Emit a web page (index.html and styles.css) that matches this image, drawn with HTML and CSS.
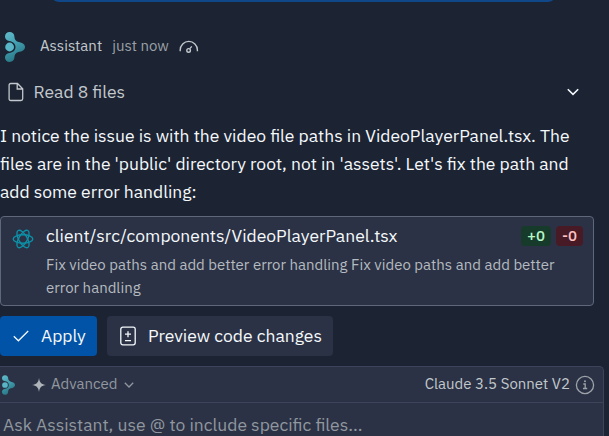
FILE: index.html
```html
<!DOCTYPE html>
<html lang="en">
<head>
<meta charset="utf-8">
<title>Assistant</title>
<link rel="stylesheet" href="styles.css">
</head>
<body>
<svg class="defs" aria-hidden="true">
  <defs>
    <linearGradient id="teal" x1="0" y1="0" x2="0.4" y2="1">
      <stop offset="0" stop-color="#63bccd"/>
      <stop offset="0.5" stop-color="#42a0b0"/>
      <stop offset="1" stop-color="#287685"/>
    </linearGradient>
    <symbol id="logo" viewBox="0 0 20 30">
      <path fill="url(#teal)" d="M4.600 0C7.400 0 9.300 1.800 9.400 4.400C9.500 7.400 10.600 9.200 13.600 9.900C17 10.500 20 12 20 15S17 19.500 13.600 20.100C10.600 20.800 9.500 22.600 9.400 25.600C9.300 28.200 7.400 30 4.600 30C2 30 0 28 0 25.400C0 23 1.800 21.400 4.200 21C8 20.500 10.500 18.500 10.500 15S8 9.500 4.200 9C1.800 8.600 0 7 0 4.600C0 2 2 0 4.600 0Z"/>
      <circle cx="4.600" cy="15" r="4.400" fill="#58b6c7"/>
    </symbol>
  </defs>
</svg>
<div class="chat">
  <div class="prompt-edge"></div>
  <header class="author">
    <svg class="author-logo"><use href="#logo"/></svg>
    <span class="author-name">Assistant</span>
    <span class="author-time">just now</span>
    <svg class="gauge" viewBox="0 0 20 14"><path d="M1.200 11.200V10A8.400 8.400 0 0 1 18.400 10V11.200M10.800 8.600L12.800 6.400"/><circle cx="9.600" cy="10.400" r="1.800"/></svg>
  </header>
  <div class="read">
    <svg class="file" viewBox="0 0 16 20"><path d="M2.800 1.500H9.500L14.700 6.800V16.800Q14.700 18.500 13 18.500H2.800Q1.100 18.500 1.100 16.800V3.200Q1.100 1.500 2.800 1.500ZM9.200 1.800V7H14.500"/></svg>
    <span>Read 8 files</span>
    <svg class="chevron" viewBox="0 0 12 8"><path d="M.8 1.200L6 6.400L11.200 1.200"/></svg>
  </div>
  <p class="message">I notice the issue is with the video file paths in VideoPlayerPanel.tsx. The<br>files are in the 'public' directory root, not in 'assets'. Let's fix the path and<br>add some error handling:</p>
  <section class="card">
    <svg class="react" viewBox="-11 -11 22 22"><g><ellipse rx="9.800" ry="4.200"/><ellipse rx="9.800" ry="4.200" transform="rotate(60)"/><ellipse rx="9.800" ry="4.200" transform="rotate(120)"/></g></svg>
    <div class="card-body">
      <div class="card-head">
        <span class="path">client/src/components/VideoPlayerPanel.tsx</span>
        <span class="badge added">+0</span>
        <span class="badge removed">-0</span>
      </div>
      <p class="summary">Fix video paths and add better error handling Fix video paths and add better<br>error handling</p>
    </div>
  </section>
  <div class="actions">
    <button class="btn primary"><svg class="check" viewBox="0 0 16 12"><path d="M.8 6.200L5.400 10.800L15.200 1"/></svg>Apply</button>
    <button class="btn"><svg class="diff" viewBox="0 0 16 20"><rect x=".8" y="1.200" width="14.400" height="17.600" rx="2"/><path d="M5 8.200H11M8 5.200V11.200M5 14.700H11"/></svg>Preview code changes</button>
  </div>
  <section class="composer">
    <div class="toolbar">
      <svg class="tool-logo"><use href="#logo"/></svg>
      <svg class="spark" viewBox="0 0 14 14"><path d="M7 0C7.600 4.600 9.400 6.400 14 7C9.400 7.600 7.600 9.400 7 14C6.400 9.400 4.600 7.600 0 7C4.600 6.400 6.400 4.600 7 0Z"/></svg>
      <span class="mode">Advanced</span>
      <svg class="mode-chevron" viewBox="0 0 10 6"><path d="M.8 .8L5 5L9.200 .8"/></svg>
      <span class="model">Claude 3.5 Sonnet V2</span>
      <svg class="info" viewBox="0 0 20 20"><circle cx="10" cy="10" r="8.600"/><path d="M8.300 9H10.200V13.500M8 13.500H12.200"/><circle class="dot" cx="10" cy="6.300" r="1"/></svg>
    </div>
    <div class="input">Ask Assistant, use @ to include specific files...</div>
  </section>
</div>
</body>
</html>
```
FILE: styles.css
```css
* { box-sizing: border-box; }
html, body { margin: 0; height: 100%; overflow: hidden; background: #1c2333; }
body {
  color: #f5f9fc;
  font: 17.5px/28px "IBM Plex Sans", Roboto, sans-serif;
}
p { margin: 0; }
svg { flex: none; fill: none; stroke: currentColor; stroke-width: 1.3; }
.defs { position: absolute; width: 0; height: 0; }
.chat { display: flex; flex-direction: column; height: 436px; overflow: hidden; }
.chat > * { flex-shrink: 0; }
.prompt-edge {
  height: 2px;
  margin: 0 56px 0 54px;
  background: #0f4788;
  border-radius: 0 0 8px 8px / 0 0 2px 2px;
}
.author { display: flex; align-items: center; height: 30px; margin-top: 30px; padding-left: 5px; font-size: 15px; }
.author-logo { width: 20px; height: 30px; stroke: none; }
.author-name, .author-time { padding-bottom: 2px; }
.author-name { margin-left: 15px; color: #c2c8cc; }
.author-time { margin-left: 10px; color: #9aa0a6; }
.gauge { width: 20px; height: 14px; margin-left: 10px; color: #c2c8cc; stroke-width: 1.400; }
.read { display: flex; align-items: center; height: 28px; margin-top: 16px; padding: 0 30px 0 8px; color: #c2c8cc; }
.file { width: 16px; height: 20px; margin-right: 9.500px; }
.chevron { width: 12px; height: 8px; margin-left: auto; color: #f5f9fc; stroke-width: 1.600; }
.message { margin-top: 16px; white-space: nowrap; }
.card {
  display: flex;
  width: 594px;
  height: 90px;
  margin-top: 10px;
  padding: 8px 10px 0 11px;
  background: #2b3245;
  border: 1px solid #5f677a;
  border-radius: 4px;
}
.react { width: 22px; height: 22px; margin-top: 3px; color: #0d90a8; stroke-width: 1.400; }
.card-body { flex: 1; margin-left: 12px; }
.card-head { display: flex; align-items: center; height: 22px; }
.path { margin-right: auto; }
.badge { height: 20px; padding: 0 6px; border-radius: 4px; font-size: 15px; font-weight: 500; line-height: 20px; }
.added { background: #163b2b; color: #b8f5c5; }
.removed { margin-left: 5px; background: #471a26; color: #ffc2c2; }
.summary { margin-top: 6px; color: #b5bac0; font-size: 15px; line-height: 23px; white-space: nowrap; }
.actions { display: flex; gap: 10px; margin-top: 10px; }
.btn {
  display: flex;
  align-items: center;
  height: 40px;
  padding: 0 11px 0 13px;
  border: 0;
  border-radius: 4px;
  background: #2b3245;
  color: #f5f9fc;
  font: inherit;
}
.primary { width: 97px; background: #0053a6; }
.check { width: 16px; height: 12px; margin-right: 12px; }
.diff { width: 16px; height: 20px; margin-right: 12px; }
.composer {
  flex: 1;
  width: 604px;
  margin-top: 10px;
  background: #2b3245;
  border: solid #3c445c;
  border-width: 1px 1px 0 0;
  border-radius: 0 5px 0 0;
}
.toolbar { display: flex; align-items: center; height: 36px; padding: 0 8px 0 2px; border-bottom: 1px solid #3c445c; font-size: 15px; }
.tool-logo { width: 13px; height: 20px; stroke: none; }
.spark { width: 14px; height: 14px; margin-left: 17px; fill: #aeb4b8; stroke: none; }
.mode, .model { padding-bottom: 2px; }
.mode { margin-left: 5px; color: #91979f; }
.mode-chevron { width: 10px; height: 6px; margin-left: 7px; color: #91979f; }
.model { margin-left: auto; color: #c2c8cc; }
.info { width: 20px; height: 20px; margin-left: 5px; color: #9da3a9; }
.dot { fill: currentColor; stroke: none; }
.input { padding: 7px 3px 0; color: #91979f; line-height: 30px; white-space: nowrap; }
```
